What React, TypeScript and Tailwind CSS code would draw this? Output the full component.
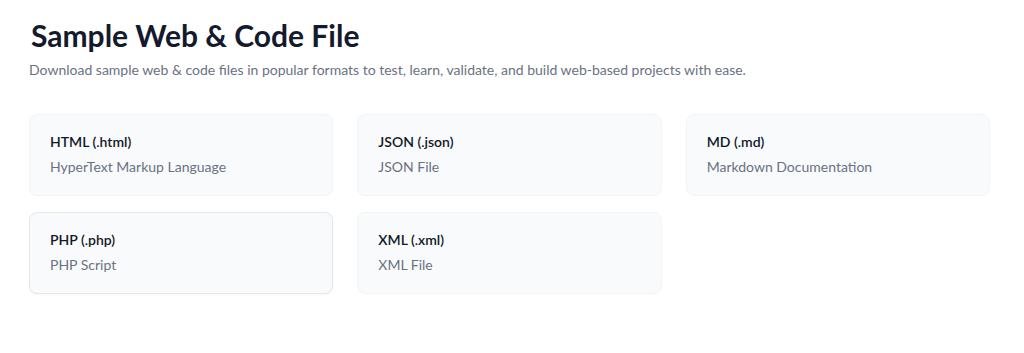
const formats = [
  { name: 'HTML (.html)', desc: 'HyperText Markup Language' },
  { name: 'JSON (.json)', desc: 'JSON File' },
  { name: 'MD (.md)', desc: 'Markdown Documentation' },
  { name: 'PHP (.php)', desc: 'PHP Script', active: true },
  { name: 'XML (.xml)', desc: 'XML File' },
];

export default function App() {
  return (
    <div className="min-h-[353px] bg-white px-[29px] pt-[17px] font-['Lato',sans-serif]">
      <h1 className="pl-[2px] text-[30px] font-bold leading-[36px] text-[#141a2e]">
        Sample Web &amp; Code File
      </h1>
      <p className="mt-[7px] text-[14px] leading-[20px] text-gray-500">
        Download sample web &amp; code files in popular formats to test, learn, validate, and build web-based projects with ease.
      </p>

      <div className="mt-[34px] grid w-[961px] grid-cols-3 gap-x-6 gap-y-4">
        {formats.map((f) => (
          <div
            key={f.name}
            className={
              f.active
                ? 'rounded-lg border border-gray-200 bg-gray-50 px-5 pt-[17px] pb-[18px] shadow-[0_1px_2px_rgba(0,0,0,0.03)]'
                : 'rounded-lg border border-gray-100 bg-gray-50 px-5 pt-[17px] pb-[18px]'
            }
          >
            <h3 className="text-[14px] font-semibold leading-[20px] text-gray-900">{f.name}</h3>
            <p className="mt-[5px] text-[14px] leading-[20px] text-gray-500">{f.desc}</p>
          </div>
        ))}
      </div>
    </div>
  );
}
